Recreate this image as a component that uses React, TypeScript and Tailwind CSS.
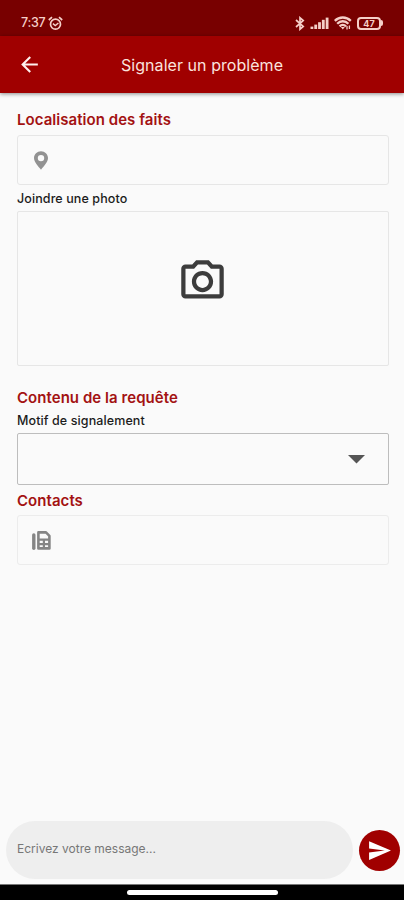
import type { ReactNode } from 'react';
import { MdArrowBack, MdOutlinePhotoCamera, MdSend } from 'react-icons/md';

const AlarmIcon = () => (
    <svg width="15" height="15" viewBox="0 0 15 15" fill="none" stroke="currentColor" strokeWidth="1.7">
        <circle cx="7.5" cy="8.2" r="5" />
        <path d="M4.9 7.6L7.3 9.6L10.4 7" strokeWidth="1.4" />
        <path d="M0.8 4L4 1.2M14.2 4L11 1.2" />
    </svg>
);

const BluetoothIcon = () => (
    <svg width="10" height="15" viewBox="0 0 10 15" fill="none" stroke="currentColor" strokeWidth="1.7">
        <path d="M1 4L8.2 10.4L5 13.2V1.8L8.2 4.6L1 11" />
    </svg>
);

const SignalBars = () => (
    <svg width="19" height="12" viewBox="0 0 19 12" fill="currentColor">
        <rect x="0.5" y="9.6" width="2.8" height="2.4" />
        <rect x="4.3" y="7.6" width="2.8" height="4.4" />
        <rect x="8.1" y="5.2" width="2.8" height="6.8" />
        <rect x="11.9" y="2.8" width="2.8" height="9.2" />
        <rect x="15.7" y="0.6" width="2.8" height="11.4" />
    </svg>
);

const WifiIcon = () => (
    <svg width="18" height="14" viewBox="0 0 18 14" fill="none" stroke="currentColor" strokeWidth="2.3">
        <path d="M0.8 4.8C5.4 0.4 12.2 0.4 16.8 4.8" />
        <path d="M3.2 7.7C6.4 4.4 11.2 4.4 14.4 7.7" />
        <path d="M5.6 10.4C7.6 8.3 10 8.3 12 10.4" />
        <path d="M6.8 11H10.8L8.8 13.6Z" fill="currentColor" stroke="none" />
        <path d="M13 10V13.6M15.4 9.4V13" strokeWidth="1.3" />
    </svg>
);

const Battery = () => (
    <div className="flex items-center">
        <div className="flex h-[13px] w-[24px] items-center justify-center rounded-[4px] border-2 border-[#f5cfc8] text-[9px] font-bold leading-none">
            47
        </div>
        <div className="h-[6px] w-[2px] rounded-r-sm bg-[#f5cfc8]" />
    </div>
);

const PinIcon = () => (
    <svg width="14" height="19" viewBox="0 0 14 19" fill="#929292" fillRule="evenodd">
        <path d="M7 0.2C3.1 0.2 0 3.3 0 7.1C0 11.3 4.2 15.2 7 18.8C9.8 15.2 14 11.3 14 7.1C14 3.3 10.9 0.2 7 0.2ZM7 3.9A3.2 3.2 0 1 1 7 10.3A3.2 3.2 0 1 1 7 3.9Z" />
    </svg>
);

const FaxIcon = () => (
    <svg width="19" height="19" viewBox="0 0 19 19" fill="none" stroke="#858585">
        <path d="M1.8 4V17.2" strokeWidth="3.4" strokeLinecap="round" />
        <path d="M6.4 1.4H14L17.4 4.8V17.4H6.4Z" strokeWidth="2.6" strokeLinejoin="round" />
        <path d="M6 8.6H17.6M6 13.2H17.6M11.9 8.6V17.8" strokeWidth="2.2" />
    </svg>
);

const StatusBar = () => (
    <div className="flex h-9 items-start bg-[#780000] pl-[21px] pr-[21px] pt-[15px] text-[#f5cfc8]">
        <div className="flex h-4 items-center">
            <span className="w-[27px] whitespace-nowrap text-[12.5px] font-medium tracking-[-0.3px]">7:37</span>
            <AlarmIcon />
        </div>
        <div className="ml-auto flex h-4 items-center">
            <div className="mr-[5px]">
                <BluetoothIcon />
            </div>
            <SignalBars />
            <div className="ml-[5px] mr-[5px]">
                <WifiIcon />
            </div>
            <Battery />
        </div>
    </div>
);

const Heading = ({ children }: { children: ReactNode }) => (
    <h2 className="whitespace-nowrap text-[15px] font-semibold leading-5 tracking-[0.05px] text-[#a31212]">
        {children}
    </h2>
);

const Label = ({ children }: { children: ReactNode }) => (
    <p className="mb-1 whitespace-nowrap text-[12.5px] font-medium leading-4 tracking-[0.1px] text-[#1c1c1c]">
        {children}
    </p>
);

const App = () => {
    return (
        <div className="flex h-[900px] w-[404px] flex-col overflow-hidden bg-[#fafafa] font-['Inter','Roboto',sans-serif]">
            <StatusBar />

            <header className="flex h-[57px] shrink-0 items-center bg-[#a00000] pl-[17px] shadow-[0_1px_4px_rgba(0,0,0,0.45)]">
                <MdArrowBack size={25} className="text-[#fff0ee]" />
                <h1 className="ml-[79px] whitespace-nowrap text-[16px] tracking-[0.05px] text-[#fbe3de]">
                    Signaler un problème
                </h1>
            </header>

            <main className="flex-1 pl-[17px] pr-[15px] pt-[17px]">
                <Heading>Localisation des faits</Heading>
                <div className="mb-1.5 mt-[5px] flex h-[50px] items-center rounded-[3px] border border-[#e6e6e6] pl-[16px]">
                    <PinIcon />
                </div>

                <Label>Joindre une photo</Label>
                <div className="mb-[22px] flex h-[155px] items-center justify-center rounded-[2px] border border-[#e6e6e6] pb-[15px] pr-[2px]">
                    <MdOutlinePhotoCamera size={51} className="text-[#3c3c3c]" />
                </div>

                <Heading>Contenu de la requête</Heading>
                <div className="h-[5px]" />
                <Label>Motif de signalement</Label>
                <div className="mb-1.5 flex h-[52px] items-center justify-end rounded-[2px] border border-[#bdbdbd] pr-[23px]">
                    <svg width="17" height="9" viewBox="0 0 17 9" fill="#555555">
                        <path d="M0 0H17L8.5 8.5Z" />
                    </svg>
                </div>

                <Heading>Contacts</Heading>
                <div className="mt-1 flex h-[50px] items-center rounded-[3px] border border-[#ececec] pl-[14px]">
                    <FaxIcon />
                </div>
            </main>

            <div className="mb-[5px] flex shrink-0 items-center pl-[6px] pr-[4px]">
                <div className="flex h-[58px] w-[347px] items-center rounded-full bg-[#eeeeee] pl-[11px]">
                    <span className="whitespace-nowrap pb-[2px] text-[12px] text-[#777777]">Ecrivez votre message...</span>
                </div>
                <div className="ml-auto flex size-[41px] items-center justify-center rounded-full bg-[#a00000]">
                    <MdSend size={25} className="text-white" />
                </div>
            </div>

            <div className="flex h-4 shrink-0 justify-center border-t border-[#777777] bg-black pt-[5px]">
                <div className="h-[5px] w-[151px] rounded-full bg-white" />
            </div>
        </div>
    );
};

export default App;
